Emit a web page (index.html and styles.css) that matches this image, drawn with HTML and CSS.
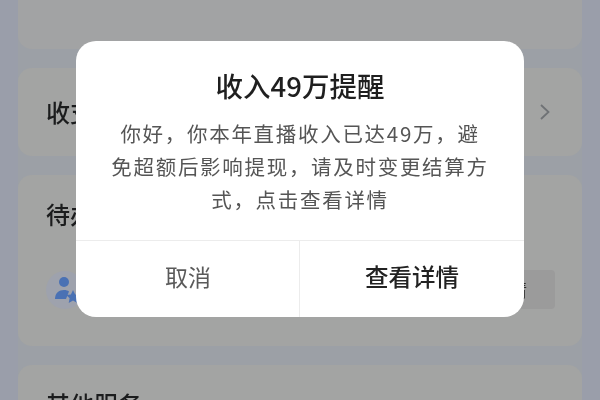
FILE: index.html
```html
<!DOCTYPE html>
<html lang="zh-CN">
<head>
<meta charset="utf-8">
<title>收入49万提醒</title>
<link rel="stylesheet" href="styles.css">
</head>
<body>
<main class="page">
  <section class="card card-top"></section>
  <section class="card card-income">
    <h2 class="card-title">收支明细</h2>
    <svg class="chevron" viewBox="0 0 12 18" width="12" height="18" aria-hidden="true"><path d="M2 2l7.500 7L2 16" fill="none" stroke="#6f7275" stroke-width="1.800"/></svg>
  </section>
  <section class="card card-todo">
    <h2 class="card-title">待办事项</h2>
    <div class="todo-row">
      <span class="todo-icon">
        <svg viewBox="0 0 34 34" width="34" height="34" aria-hidden="true">
          <circle cx="16" cy="9" r="5" fill="#4a71b4"/>
          <path d="M7 26c0-6 4-9 9-9 2 0 4 .5 5 1.500l-3 7.500z" fill="#4a71b4"/>
          <path d="M25 17l2.200 4.400 4.800.6-3.500 3.300.9 4.700-4.400-2.400-4.300 2.400.9-4.700-3.500-3.300 4.800-.6z" fill="#4a71b4"/>
        </svg>
      </span>
      <span class="todo-btn">详情</span>
    </div>
  </section>
  <section class="card card-other">
    <h2 class="card-title">其他服务</h2>
  </section>
</main>
<div class="dialog" role="dialog">
  <div class="dialog-main">
    <h1 class="dialog-title">收入49万提醒</h1>
    <p class="dialog-text">你好，你本年直播收入已达49万，避<br>免超额后影响提现，请及时变更结算方<br>式，点击查看详情</p>
  </div>
  <div class="dialog-actions">
    <span class="action action-cancel">取消</span>
    <span class="action action-confirm">查看详情</span>
  </div>
</div>
</body>
</html>
```
FILE: styles.css
```css
* { box-sizing: border-box; }
html, body { margin: 0; height: 100%; }
body {
  width: 600px;
  height: 400px;
  overflow: hidden;
  position: relative;
  background: #9a9eaa;
  font-family: "Noto Sans CJK SC", "Noto Sans", sans-serif;
}
.page {
  height: 400px;
  margin: 0 18px;
  overflow: hidden;
  display: flex;
  flex-direction: column;
  gap: 19px;
  background: #9ca0a6;
  filter: blur(0.4px);
}
.card {
  flex: none;
  background: #a3a4a3;
  border-radius: 14px;
  padding: 0 28px;
}
.card-top { height: 49px; background: #a2a3a4; border-radius: 0 0 14px 14px; }
.card-income {
  height: 88px;
  display: flex;
  align-items: center;
  justify-content: space-between;
  padding-right: 31px;
}
.card-todo { height: 171px; padding-top: 21px; }
.card-other { height: 60px; padding-top: 21px; }
.card-title {
  margin: 0;
  font-size: 24px;
  line-height: 36px;
  font-weight: 500;
  color: #1b1c1d;
}
.todo-row {
  margin-top: 38px;
  display: flex;
  align-items: center;
  justify-content: space-between;
  margin-right: -1px;
}
.todo-icon {
  width: 38px;
  height: 38px;
  border-radius: 50%;
  background: #9ea2ad;
  display: flex;
  align-items: center;
  justify-content: center;
}
.todo-btn {
  width: 80px;
  height: 39px;
  background: #9b9b9b;
  border-radius: 4px;
  color: #2b2b2b;
  font-size: 18px;
  line-height: 39px;
  padding-left: 16px;
}
.dialog {
  position: absolute;
  left: 76px;
  top: 41px;
  width: 448px;
  height: 276px;
  background: #fff;
  border-radius: 20px;
  display: flex;
  flex-direction: column;
  filter: blur(0.4px);
}
.dialog-main {
  height: 199px;
  padding: 23px 0 0;
  text-align: center;
}
.dialog-title {
  margin: 0;
  font-size: 27.500px;
  line-height: 42px;
  font-weight: 500;
  color: #1f1f1f;
}
.dialog-text {
  margin: 11px 0 0;
  font-size: 20.500px;
  letter-spacing: 1.700px;
  line-height: 33px;
  color: #555;
}
.dialog-actions {
  flex: 1;
  display: flex;
  padding-bottom: 6px;
  border-top: 1px solid #ececec;
}
.action {
  flex: 1;
  display: flex;
  align-items: center;
  justify-content: center;
  font-size: 23px;
}
.action-cancel { color: #5a5a5a; position: relative; }
.action-cancel::after {
  content: "";
  position: absolute;
  right: 0;
  top: 0;
  bottom: -6px;
  width: 1px;
  background: #ececec;
}
.action-confirm { color: #222; font-weight: 500; font-size: 23.500px; }
.chevron { flex: none; }
```
